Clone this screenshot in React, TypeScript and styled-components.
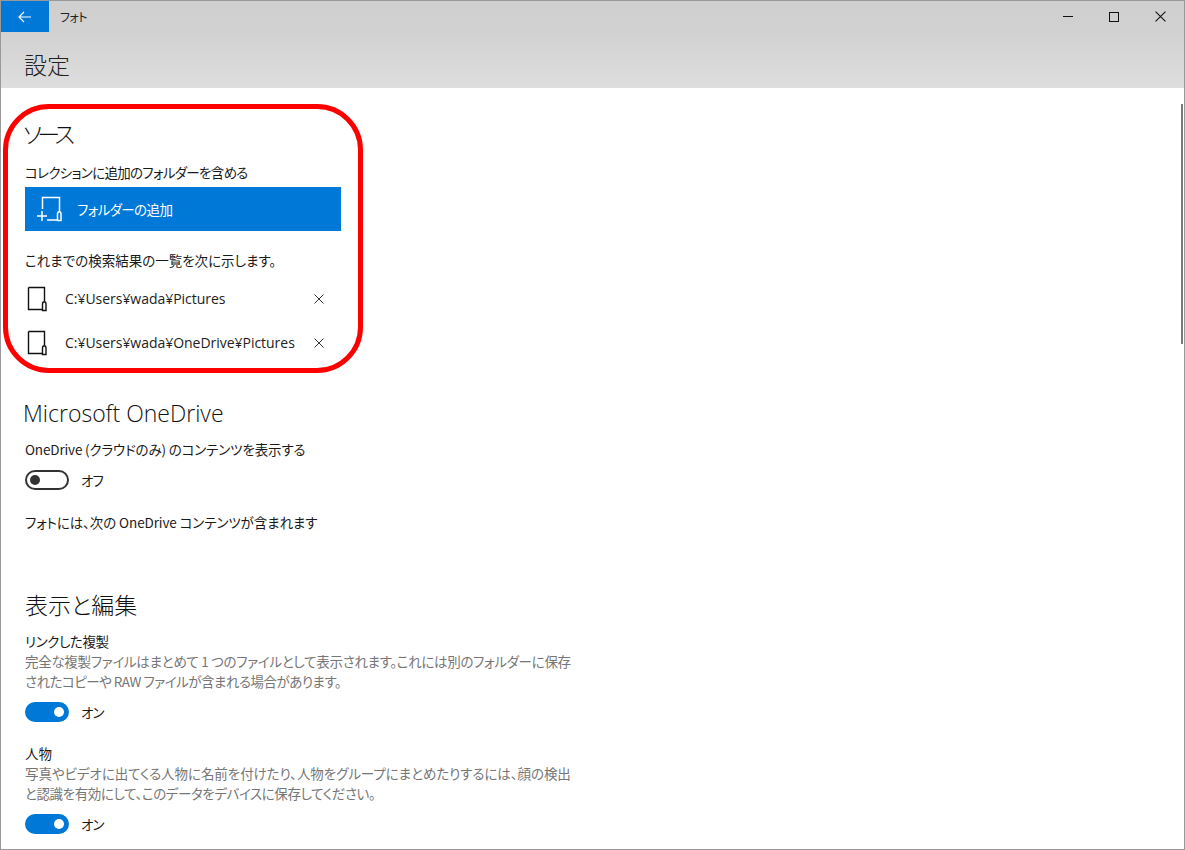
import React from 'react'
import styled, { createGlobalStyle } from 'styled-components'

const GlobalStyle = createGlobalStyle`
  html, body {
    margin: 0;
    padding: 0;
    background: #fff;
  }
  body {
    font-family: "Noto Sans CJK JP", "Open Sans", "Noto Sans", sans-serif;
    font-feature-settings: "palt";
    color: #1a1a1a;
  }
`

function FolderIcon() {
  return (
    <svg width="22" height="26" viewBox="0 0 22 26" fill="none" stroke="#111" strokeWidth="1.4">
      <path d="M2.5 1.5H18.5V15M16.5 23.5H2.5V1.5" />
      <path d="M16.5 18V24.5H20V18C20 15 16.5 15 16.5 18Z" />
    </svg>
  )
}

function AddFolderIcon() {
  return (
    <svg width="26" height="26" viewBox="0 0 26 26" fill="none" stroke="#fff" strokeWidth="1.5">
      <path d="M5.5 13V1.5H22.5V15M10 24H20.5" />
      <path d="M20.5 18V24.5H24V18C24 15 20.5 15 20.5 18Z" />
      <path d="M0 20H10M5 15V25" />
    </svg>
  )
}

function CloseIcon({ size, color }: { size: number; color: string }) {
  return (
    <svg width={size} height={size} viewBox="0 0 10 10" fill="none" stroke={color} strokeWidth="1">
      <path d="M0.5 0.5L9.5 9.5M9.5 0.5L0.5 9.5" />
    </svg>
  )
}

const paths = ['C:¥Users¥wada¥Pictures', 'C:¥Users¥wada¥OneDrive¥Pictures']

export default function App() {
  return (
    <>
      <GlobalStyle />
      <Window>
        <Header>
          <TitleBar>
            <BackButton aria-label="戻る">
              <svg width="14" height="12" viewBox="0 0 14 12" fill="none" stroke="#fff" strokeWidth="1.2">
                <path d="M13 6H1M6 1L1 6L6 11" />
              </svg>
            </BackButton>
            <AppName>フォト</AppName>
            <Controls>
              <ControlButton>
                <MinimizeBar />
              </ControlButton>
              <ControlButton>
                <MaximizeBox />
              </ControlButton>
              <ControlButton>
                <CloseIcon size={11} color="#111" />
              </ControlButton>
            </Controls>
          </TitleBar>
          <PageTitle>設定</PageTitle>
        </Header>

        <Thumb />

        <Content>
          <SourceSection>
            <Highlight />
            <SourceTitle>ソース</SourceTitle>
            <SourceLabel $track={-0.7}>コレクションに追加のフォルダーを含める</SourceLabel>
            <AddButton>
              <AddFolderIcon />
              <span>フォルダーの追加</span>
            </AddButton>
            <ListCaption>これまでの検索結果の一覧を次に示します。</ListCaption>
            {paths.map(p => (
              <PathRow key={p}>
                <FolderIcon />
                <PathText>{p}</PathText>
                <RemoveButton>
                  <CloseIcon size={10} color="#333" />
                </RemoveButton>
              </PathRow>
            ))}
          </SourceSection>

          <OneDriveTitle>Microsoft OneDrive</OneDriveTitle>
          <Line $track={-0.15}>OneDrive (クラウドのみ) のコンテンツを表示する</Line>
          <ToggleRow>
            <Toggle $on={false} />
            <span>オフ</span>
          </ToggleRow>
          <Note $track={-0.1}>フォトには、次の OneDrive コンテンツが含まれます</Note>

          <DisplayTitle>表示と編集</DisplayTitle>
          <Setting>
            <Line $track={-0.4}>リンクした複製</Line>
            <Description $track={-0.3}>完全な複製ファイルはまとめて 1 つのファイルとして表示されます。これには別のフォルダーに保存</Description>
            <Description $track={-0.5}>されたコピーや RAW ファイルが含まれる場合があります。</Description>
            <ToggleRow>
              <Toggle $on />
              <span>オン</span>
            </ToggleRow>
          </Setting>
          <Setting>
            <Line>人物</Line>
            <Description $track={-0.06}>写真やビデオに出てくる人物に名前を付けたり、人物をグループにまとめたりするには、顔の検出</Description>
            <Description $track={-0.4}>と認識を有効にして、このデータをデバイスに保存してください。</Description>
            <ToggleRow>
              <Toggle $on />
              <span>オン</span>
            </ToggleRow>
          </Setting>
        </Content>
      </Window>
    </>
  )
}

const Window = styled.div`
  position: relative;
  box-sizing: border-box;
  width: 1185px;
  height: 850px;
  overflow: hidden;
  background: #fff;
  border: 1px solid #999;
`
const Header = styled.header`
  height: 87px;
  background: linear-gradient(180deg, #cfcfcf 0%, #d1d1d1 35%, #dedede 100%);
`
const TitleBar = styled.div`
  display: flex;
  align-items: center;
  height: 31px;
`
const BackButton = styled.div`
  display: flex;
  align-items: center;
  justify-content: center;
  width: 48px;
  height: 31px;
  background: #0078d7;
`
const AppName = styled.div`
  margin-left: 11px;
  font-size: 12px;
  letter-spacing: -0.6px;
  line-height: 31px;
  color: #222;
`
const Controls = styled.div`
  display: flex;
  margin-left: auto;
  margin-right: 1px;
`
const ControlButton = styled.div`
  display: flex;
  align-items: center;
  justify-content: center;
  width: 46px;
  height: 31px;
`
const MinimizeBar = styled.div`
  width: 10px;
  height: 1px;
  background: #111;
`
const MaximizeBox = styled.div`
  box-sizing: border-box;
  width: 10px;
  height: 10px;
  border: 1px solid #111;
`
const PageTitle = styled.h1`
  margin: 14px 0 0 23px;
  font-size: 23px;
  font-weight: 300;
  line-height: 36px;
  color: #222;
`
const Thumb = styled.div`
  position: absolute;
  top: 103px;
  right: 1px;
  width: 2px;
  height: 240px;
  background: #7a7a7a;
`
const Content = styled.main`
  padding: 28px 0 0 24px;
  width: 560px;
  font-size: 13.5px;
  line-height: 20px;
`
const SourceSection = styled.section`
  position: relative;
`
const Highlight = styled.div`
  position: absolute;
  top: -12px;
  left: -22px;
  width: 360px;
  height: 269px;
  box-sizing: border-box;
  border: 5px solid #f00;
  border-radius: 46px;
  pointer-events: none;
`
const SectionTitle = styled.h2`
  margin: 0;
  font-size: 23px;
  font-weight: 300;
  line-height: 34px;
  color: #111;
`
const SourceTitle = styled(SectionTitle)`
  margin-left: -2px;
  letter-spacing: -4.5px;
`
const OneDriveTitle = styled(SectionTitle)`
  margin: 31px 0 9px -2px;
  font-family: "Open Sans", "Noto Sans CJK JP", sans-serif;
`
const DisplayTitle = styled(SectionTitle)`
  margin: 55px 0 10px;
`
const Line = styled.div<{ $track?: number }>`
  color: #1a1a1a;
  white-space: nowrap;
  letter-spacing: ${p => p.$track ?? 0}px;
`
const SourceLabel = styled(Line)`
  margin-top: 12px;
`
const AddButton = styled.div`
  display: flex;
  align-items: center;
  gap: 14px;
  box-sizing: border-box;
  width: 316px;
  height: 44px;
  margin-top: 5px;
  padding-left: 12px;
  background: #0078d7;
  color: #fff;
  letter-spacing: -0.6px;
`
const ListCaption = styled.div`
  margin: 19px 0 7px;
`
const PathRow = styled.div`
  display: flex;
  align-items: center;
  height: 44px;
  padding-left: 1px;
`
const PathText = styled.span`
  margin-left: 17px;
  font-family: "Open Sans", "Noto Sans CJK JP", sans-serif;
  font-size: 14px;
  letter-spacing: -0.03px;
  color: #222;
`
const RemoveButton = styled.div`
  position: absolute;
  left: 289px;
  display: flex;
`
const ToggleRow = styled.div`
  display: flex;
  align-items: center;
  gap: 12px;
  height: 20px;
  margin-top: 11px;
  letter-spacing: -1px;
`
const Toggle = styled.div<{ $on: boolean }>`
  position: relative;
  box-sizing: border-box;
  width: 44px;
  height: 20px;
  border-radius: 10px;
  border: 2px solid ${p => (p.$on ? '#0078d7' : '#333')};
  background: ${p => (p.$on ? '#0078d7' : 'transparent')};
  &::after {
    content: '';
    position: absolute;
    top: 3px;
    ${p => (p.$on ? 'right: 3px;' : 'left: 3px;')}
    width: 10px;
    height: 10px;
    border-radius: 50%;
    background: ${p => (p.$on ? '#fff' : '#333')};
  }
`
const Note = styled(Line)`
  margin-top: 22px;
`
const Setting = styled.div`
  & + & {
    margin-top: 21px;
  }
`
const Description = styled(Line)`
  color: #767676;
`
